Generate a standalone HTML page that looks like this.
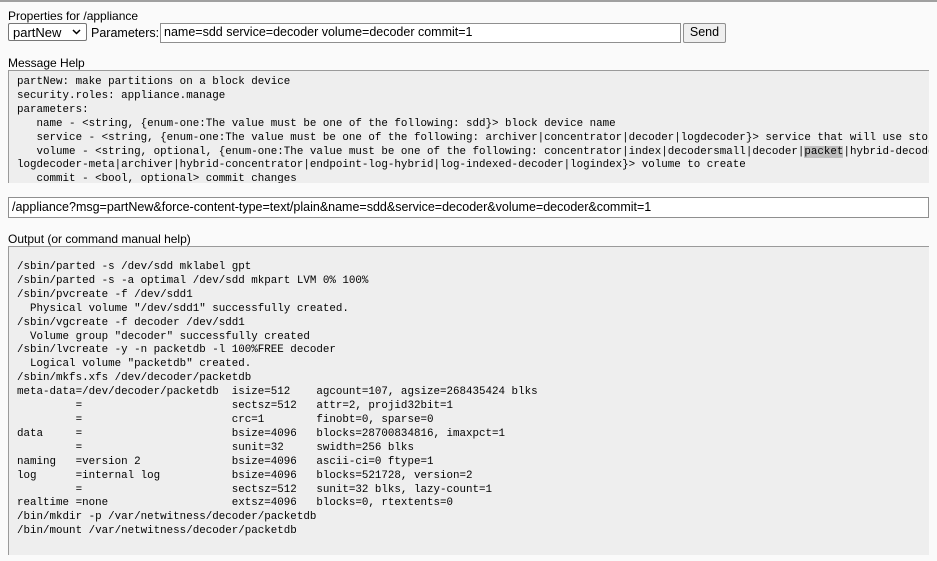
<!DOCTYPE html>
<html><head><style>
html,body{margin:0;padding:0;width:937px;height:561px;overflow:hidden;background:#fafafa;font-family:"Liberation Sans",sans-serif;font-size:12px;color:#000}
.topline{position:absolute;left:0;top:0;width:937px;height:2px;background:#a0a0a0}
.lbl{position:absolute;left:8px}
pre{margin:0;font-family:"Liberation Mono",monospace;font-size:10.85px;line-height:13.9px;white-space:pre}
.box{position:absolute;left:8px;background:#eeeeee;border-top:1px solid #9a9a9a;border-left:1px solid #9a9a9a;overflow:hidden}
.sel{position:absolute;left:8px;top:23px;width:79px;height:18px;border:1px solid #767676;border-radius:2px;background:#fff;box-sizing:border-box;font-size:13px;padding:1px 4px}
.inp{position:absolute;background:#fff;border:1px solid #8f8f8f;box-sizing:border-box;font-size:12.5px;padding:1px 3px}
.btn{position:absolute;left:683px;top:23px;width:43px;height:20px;border:1px solid #8f8f8f;background:#efefef;box-sizing:border-box;font-size:12.5px;text-align:center;line-height:17px;border-radius:2px}
.hl{background:#c0c0c0}
</style></head><body>
<div class="topline"></div>
<div class="lbl" style="top:9px">Properties for /appliance</div>
<div class="sel">partNew<svg style="position:absolute;right:5px;top:5px" width="9" height="6" viewBox="0 0 9 6"><path d="M1 1 L4.5 4.5 L8 1" stroke="#000" stroke-width="1.5" fill="none"/></svg></div>
<div class="lbl" style="left:91px;top:26px;font-size:12.5px">Parameters:</div>
<div class="inp" style="left:160px;top:23px;width:521px;height:20px">name=sdd service=decoder volume=decoder commit=1</div>
<div class="btn">Send</div>
<div class="lbl" style="top:56px">Message Help</div>
<div class="box" style="top:70px;width:921px;height:113px;padding:5px 0 0 8px;box-sizing:border-box"><pre>partNew: make partitions on a block device
security.roles: appliance.manage
parameters:
   name - &lt;string, {enum-one:The value must be one of the following: sdd}&gt; block device name
   service - &lt;string, {enum-one:The value must be one of the following: archiver|concentrator|decoder|logdecoder}&gt; service that will use storage
   volume - &lt;string, optional, {enum-one:The value must be one of the following: concentrator|index|decodersmall|decoder|<span class="hl">packet</span>|hybrid-decoder|
logdecoder-meta|archiver|hybrid-concentrator|endpoint-log-hybrid|log-indexed-decoder|logindex}&gt; volume to create
   commit - &lt;bool, optional&gt; commit changes</pre></div>
<div class="inp" style="left:8px;top:197px;width:921px;height:21px;font-size:12.5px;padding-top:2px">/appliance?msg=partNew&amp;force-content-type=text/plain&amp;name=sdd&amp;service=decoder&amp;volume=decoder&amp;commit=1</div>
<div class="lbl" style="top:232px">Output (or command manual help)</div>
<div class="box" style="top:246px;width:921px;height:309px;padding:14px 0 0 8px;box-sizing:border-box"><pre>/sbin/parted -s /dev/sdd mklabel gpt
/sbin/parted -s -a optimal /dev/sdd mkpart LVM 0% 100%
/sbin/pvcreate -f /dev/sdd1
  Physical volume "/dev/sdd1" successfully created.
/sbin/vgcreate -f decoder /dev/sdd1
  Volume group "decoder" successfully created
/sbin/lvcreate -y -n packetdb -l 100%FREE decoder
  Logical volume "packetdb" created.
/sbin/mkfs.xfs /dev/decoder/packetdb
meta-data=/dev/decoder/packetdb  isize=512    agcount=107, agsize=268435424 blks
         =                       sectsz=512   attr=2, projid32bit=1
         =                       crc=1        finobt=0, sparse=0
data     =                       bsize=4096   blocks=28700834816, imaxpct=1
         =                       sunit=32     swidth=256 blks
naming   =version 2              bsize=4096   ascii-ci=0 ftype=1
log      =internal log           bsize=4096   blocks=521728, version=2
         =                       sectsz=512   sunit=32 blks, lazy-count=1
realtime =none                   extsz=4096   blocks=0, rtextents=0
/bin/mkdir -p /var/netwitness/decoder/packetdb
/bin/mount /var/netwitness/decoder/packetdb</pre></div>
</body></html>
